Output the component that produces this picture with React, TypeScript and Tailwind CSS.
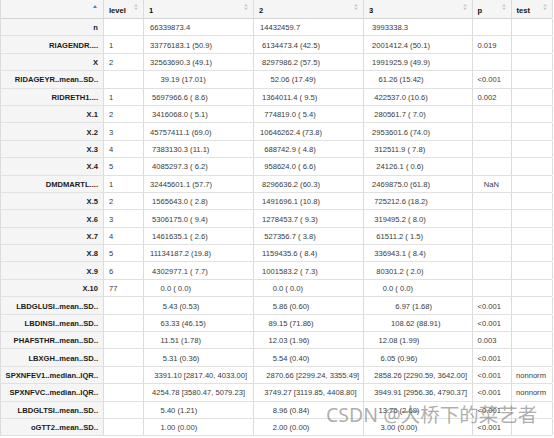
import React from "react";

// fixed-width strings from tableone keep their leading blanks
const sp = (n: number) => " ".repeat(n);

type Row = [string, string, string, string, string, string, string];

const rows: Row[] = [
  ["n", "", "66339873.4", "14432459.7", sp(1) + "3993338.3", "", ""],
  ["RIAGENDR....", "1", "33776183.1 (50.9)", sp(1) + "6134473.4 (42.5)", sp(1) + "2001412.4 (50.1)", "0.019", ""],
  ["X", "2", "32563690.3 (49.1)", sp(1) + "8297986.2 (57.5)", sp(1) + "1991925.9 (49.9)", "", ""],
  ["RIDAGEYR..mean..SD..", "", sp(5) + "39.19 (17.01)", sp(5) + "52.06 (17.49)", sp(4) + "61.26 (15.42)", "<0.001", ""],
  ["RIDRETH1....", "1", sp(1) + "5697966.6 ( 8.6)", sp(1) + "1364011.4 ( 9.5)", sp(2) + "422537.0 (10.6)", "0.002", ""],
  ["X.1", "2", sp(1) + "3416068.0 ( 5.1)", sp(2) + "774819.0 ( 5.4)", sp(2) + "280561.7 ( 7.0)", "", ""],
  ["X.2", "3", "45757411.1 (69.0)", "10646262.4 (73.8)", sp(1) + "2953601.6 (74.0)", "", ""],
  ["X.3", "4", sp(1) + "7383130.3 (11.1)", sp(2) + "688742.9 ( 4.8)", sp(2) + "312511.9 ( 7.8)", "", ""],
  ["X.4", "5", sp(1) + "4085297.3 ( 6.2)", sp(2) + "958624.0 ( 6.6)", sp(3) + "24126.1 ( 0.6)", "", ""],
  ["DMDMARTL....", "1", "32445601.1 (57.7)", sp(1) + "8296636.2 (60.3)", sp(1) + "2469875.0 (61.8)", sp(3) + "NaN", ""],
  ["X.5", "2", sp(1) + "1565643.0 ( 2.8)", sp(1) + "1491696.1 (10.8)", sp(2) + "725212.6 (18.2)", "", ""],
  ["X.6", "3", sp(1) + "5306175.0 ( 9.4)", sp(1) + "1278453.7 ( 9.3)", sp(2) + "319495.2 ( 8.0)", "", ""],
  ["X.7", "4", sp(1) + "1461635.1 ( 2.6)", sp(2) + "527356.7 ( 3.8)", sp(3) + "61511.2 ( 1.5)", "", ""],
  ["X.8", "5", "11134187.2 (19.8)", sp(1) + "1159435.6 ( 8.4)", sp(2) + "336943.1 ( 8.4)", "", ""],
  ["X.9", "6", sp(1) + "4302977.1 ( 7.7)", sp(1) + "1001583.2 ( 7.3)", sp(3) + "80301.2 ( 2.0)", "", ""],
  ["X.10", "77", sp(5) + "0.0 ( 0.0)", sp(6) + "0.0 ( 0.0)", sp(6) + "0.0 ( 0.0)", "", ""],
  ["LBDGLUSI..mean..SD..", "", sp(6) + "5.43 (0.53)", sp(6) + "5.86 (0.60)", sp(12) + "6.97 (1.68)", "<0.001", ""],
  ["LBDINSI..mean..SD..", "", sp(5) + "63.33 (46.15)", sp(4) + "89.15 (71.86)", sp(10) + "108.62 (88.91)", "<0.001", ""],
  ["PHAFSTHR..mean..SD..", "", sp(5) + "11.51 (1.78)", sp(4) + "12.03 (1.96)", sp(4) + "12.08 (1.99)", "0.003", ""],
  ["LBXGH..mean..SD..", "", sp(6) + "5.31 (0.36)", sp(6) + "5.54 (0.40)", sp(5) + "6.05 (0.96)", "<0.001", ""],
  ["SPXNFEV1..median..IQR..", "", sp(2) + "3391.10 [2817.40, 4033.00]", sp(3) + "2870.66 [2299.24, 3355.49]", sp(2) + "2858.26 [2290.59, 3642.00]", "<0.001", "nonnorm"],
  ["SPXNFVC..median..IQR..", "", sp(1) + "4254.78 [3580.47, 5079.23]", sp(2) + "3749.27 [3119.85, 4408.80]", sp(2) + "3949.91 [2956.36, 4790.37]", "<0.001", "nonnorm"],
  ["LBDGLTSI..mean..SD..", "", sp(5) + "5.40 (1.21)", sp(6) + "8.96 (0.84)", sp(4) + "13.76 (2.69)", "<0.001", ""],
  ["oGTT2..mean..SD..", "", sp(5) + "1.00 (0.00)", sp(6) + "2.00 (0.00)", sp(5) + "3.00 (0.00)", "<0.001", ""],
];

const widths = ["w-[103px]", "w-[40px]", "w-[110px]", "w-[110px]", "w-[108.5px]", "w-[39px]", "w-[41px]"];
const headers = ["", "level", "1", "2", "3", "p", "test"];

function SortIcon() {
  return (
    <svg className="absolute right-[5px] top-[4px]" width="4" height="6" viewBox="0 0 4 6" aria-hidden="true">
      <path d="M0 2.3L2 0L4 2.3Z" fill="#c9c9c9" />
      <path d="M0 3.7L2 6L4 3.7Z" fill="#c9c9c9" />
    </svg>
  );
}

function AscIcon() {
  return (
    <svg className="absolute right-[6px] top-[4.5px]" width="4" height="3" viewBox="0 0 4 3" aria-hidden="true">
      <path d="M0 3L2 0L4 3Z" fill="#3a86c8" />
    </svg>
  );
}

export default function App() {
  return (
    <div className="relative h-[438px] w-[554px] overflow-hidden bg-white font-['Liberation_Sans',Arial,sans-serif] text-[7.6px]">
      <div className="w-[551.5px] border-l border-[#dcdcdc]">
        {/* Header */}
        <div className="flex h-[19px] border-b border-[#d4d4d4] bg-[#f5f5f5]">
          {headers.map((h, i) => (
            <div
              key={i}
              className={`relative flex shrink-0 items-center border-r border-[#dcdcdc] px-[5px] pt-[3.5px] font-bold text-[#111] ${widths[i]}`}
            >
              {h}
              {i === 0 ? <AscIcon /> : <SortIcon />}
            </div>
          ))}
        </div>

        {/* Body */}
        {rows.map((r, ri) => (
          <div key={ri} className="flex h-[17.4px] border-b border-[#e1e1e1]">
            <div className="flex w-[103px] shrink-0 items-center justify-end border-r border-[#dcdcdc] bg-[#f5f5f5] px-[5px] pt-[1.5px] font-bold text-[#1a1a1a] whitespace-nowrap">
              {r[0]}
            </div>
            <div className="flex w-[40px] shrink-0 items-center border-r border-[#dcdcdc] px-[5px] pt-[1.5px] text-[#3a3a3a]">
              {r[1]}
            </div>
            {[2, 3, 4].map((c) => (
              <div
                key={c}
                className={`flex shrink-0 items-center border-r border-[#dcdcdc] pl-[6px] pt-[1.5px] text-[#3a3a3a] whitespace-pre ${widths[c]}`}
              >
                {r[c]}
              </div>
            ))}
            <div className="flex w-[39px] shrink-0 items-center border-r border-[#dcdcdc] pl-[5px] pt-[1.5px] text-[#3a3a3a] whitespace-pre">
              {r[5]}
            </div>
            <div className="flex w-[41px] shrink-0 items-center border-r border-[#dcdcdc] pl-[4.5px] pt-[1.5px] text-[#3a3a3a] whitespace-pre">
              {r[6]}
            </div>
          </div>
        ))}
      </div>

      {/* CSDN watermark */}
      <div className="pointer-events-none absolute left-[326px] top-[405px] whitespace-nowrap font-['Noto_Sans','Noto_Sans_CJK_SC',sans-serif] text-[19.5px] leading-none text-[rgba(120,120,120,0.6)]">
        CSDN @大桥下的菜艺者
      </div>
    </div>
  );
}
